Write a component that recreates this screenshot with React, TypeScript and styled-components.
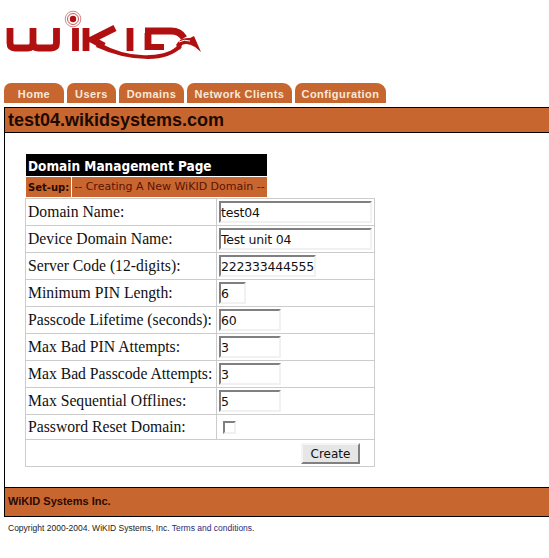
import React from "react";
import styled, { createGlobalStyle } from "styled-components";

const orange = "#c8662f";

const GlobalStyle = createGlobalStyle`
  html, body {
    margin: 0;
    padding: 0;
    background: #fff;
    overflow: hidden;
  }
`;

type FieldType = {
  label: string;
  value: string;
  width: number;
};

const fields: FieldType[] = [
  { label: "Domain Name:", value: "test04", width: 153 },
  { label: "Device Domain Name:", value: "Test unit 04", width: 153 },
  { label: "Server Code (12-digits):", value: "222333444555", width: 97 },
  { label: "Minimum PIN Length:", value: "6", width: 27 },
  { label: "Passcode Lifetime (seconds):", value: "60", width: 62 },
  { label: "Max Bad PIN Attempts:", value: "3", width: 62 },
  { label: "Max Bad Passcode Attempts:", value: "3", width: 62 },
  { label: "Max Sequential Offlines:", value: "5", width: 62 },
];

const tabs = [
  { label: "Home", width: 60 },
  { label: "Users", width: 49 },
  { label: "Domains", width: 65 },
  { label: "Network Clients", width: 105 },
  { label: "Configuration", width: 91 },
];

const Logo = () => (
  <LogoSvg viewBox="0 0 210 60" width="210" height="60">
    <g fill="none" stroke="#b01010">
      <circle cx="73" cy="19" r="7.800" strokeWidth="1" opacity="0.5" />
      <circle cx="73" cy="19" r="5.500" strokeWidth="1" opacity="0.7" />
      <path
        d="M10 28V43Q10 48 15 48H28Q33 48 33 43V28M33 43Q33 48 38 48H51Q56.500 48 56.500 43V28"
        strokeWidth="6.800"
      />
      <path d="M75.500 28V51M86 28V51M115 28L92 39.500L104 46" strokeWidth="6.800" />
      <path d="M130 28V51" strokeWidth="6.800" />
      <path d="M148 33V50M145 31H171Q180 31 184 38" strokeWidth="6.800" />
      <path d="M148 47H164" strokeWidth="6" />
    </g>
    <g fill="#b01010">
      <circle cx="73" cy="19" r="3.200" />
      <path d="M98 42Q125 57 150 55Q170 54 178 45L182 47Q170 59 148 59Q122 59 96 47Z" />
      <path d="M176 45Q180 37 190 38L194 36L201 52L195 47Q187 42 182 45L180 50Z" />
    </g>
    <path d="M179 42Q184 39 190 41" fill="none" stroke="#fff" strokeWidth="1" />
  </LogoSvg>
);

export default function App() {
  return (
    <Page>
      <GlobalStyle />
      <LogoBar>
        <Logo />
      </LogoBar>
      <TabRow>
        {tabs.map((t) => (
          <Tab key={t.label} href="#" $w={t.width}>
            {t.label}
          </Tab>
        ))}
      </TabRow>
      <Panel>
        <HostBar>test04.wikidsystems.com</HostBar>
        <Content>
          <PageTitle>Domain Management Page</PageTitle>
          <SubRow>
            <SubLabel>Set-up:</SubLabel>
            <SubText>-- Creating A New WiKID Domain --</SubText>
          </SubRow>
          <FormTable>
            <tbody>
              {fields.map((f) => (
                <tr key={f.label}>
                  <LabelCell>{f.label}</LabelCell>
                  <ValueCell>
                    <TextInput $w={f.width} defaultValue={f.value} />
                  </ValueCell>
                </tr>
              ))}
              <tr>
                <ShortLabelCell>Password Reset Domain:</ShortLabelCell>
                <ShortValueCell>
                  <CheckBox />
                </ShortValueCell>
              </tr>
              <tr>
                <ButtonCell colSpan={2}>
                  <CreateButton type="button">Create</CreateButton>
                </ButtonCell>
              </tr>
            </tbody>
          </FormTable>
        </Content>
        <FooterBar>WiKID Systems Inc.</FooterBar>
      </Panel>
      <Copyright>
        Copyright 2000-2004. WiKID Systems, Inc. <TermsLink href="#">Terms and conditions</TermsLink>.
      </Copyright>
    </Page>
  );
}

const Page = styled.div`
  width: 549px;
  height: 558px;
  overflow: hidden;
`;

const LogoBar = styled.div`
  height: 83px;
`;

const LogoSvg = styled.svg`
  display: block;
`;

const TabRow = styled.div`
  display: flex;
  gap: 3px;
  padding-left: 4px;
  height: 20px;
`;

const Tab = styled.a<{ $w: number }>`
  display: block;
  width: ${(p) => p.$w}px;
  text-align: center;
  background: ${orange};
  border-radius: 7px 9px 0 0;
  color: #f7e9dc;
  font: bold 11px/22px "Liberation Sans", Arial, sans-serif;
  letter-spacing: 0.45px;
  text-decoration: none;
`;

const Panel = styled.div`
  margin: 4px 0 0 4px;
  border-left: 1px solid #000;
`;

const HostBar = styled.div`
  height: 24px;
  padding-left: 3px;
  background: ${orange};
  border-top: 1px solid #000;
  border-bottom: 1px solid #000;
  color: #1c0a02;
  font: bold 18px/24px "Liberation Sans", Arial, sans-serif;
`;

const Content = styled.div`
  height: 354px;
  padding: 21px 0 0 20px;
  box-sizing: border-box;
`;

const PageTitle = styled.div`
  width: 241px;
  height: 22px;
  margin-left: 1px;
  padding-left: 2px;
  box-sizing: border-box;
  background: #000;
  color: #fff;
  font: bold 13.500px/24px "DejaVu Sans Condensed", "DejaVu Sans", sans-serif;
  font-stretch: condensed;
`;

const SubRow = styled.div`
  display: flex;
  gap: 1px;
  width: 241px;
  height: 20px;
  margin: 1px 0 1px 1px;
`;

const SubLabel = styled.div`
  width: 45px;
  padding-left: 2px;
  box-sizing: border-box;
  background: ${orange};
  color: #2a0a02;
  font: bold 10px/21px "DejaVu Sans", sans-serif;
`;

const SubText = styled.div`
  flex: 1;
  text-align: center;
  background: ${orange};
  color: #5a1206;
  font: 11px/20px "DejaVu Sans", sans-serif;
  white-space: nowrap;
`;

const FormTable = styled.table`
  width: 350px;
  table-layout: fixed;
  border-collapse: collapse;
  border: 1px solid #ccc;
  font: 15.700px "Liberation Serif", "Times New Roman", serif;
  color: #111;
`;

const LabelCell = styled.td`
  width: 188px;
  height: 26px;
  padding: 0 0 0 2px;
  border: 1px solid #ccc;
  white-space: nowrap;
`;

const ValueCell = styled.td`
  height: 26px;
  padding: 0 0 0 2px;
  border: 1px solid #ccc;
`;

const ShortLabelCell = styled(LabelCell)`
  height: 24px;
`;

const ShortValueCell = styled(ValueCell)`
  height: 24px;
  padding-left: 6px;
`;

const ButtonCell = styled.td`
  height: 23px;
  padding: 3px 14px 0 0;
  box-sizing: content-box;
  border: 1px solid #ccc;
  text-align: right;
  vertical-align: top;
  line-height: 0;
`;

const TextInput = styled.input<{ $w: number }>`
  display: block;
  width: ${(p) => p.$w}px;
  height: 22px;
  padding: 0;
  box-sizing: border-box;
  border-style: solid;
  border-width: 2px;
  border-color: #808080 #f1f1f1 #f1f1f1 #808080;
  background: #fff;
  color: #111;
  font: 12.500px "DejaVu Sans", sans-serif;
  letter-spacing: -0.2px;
  outline: none;
`;

const CheckBox = styled.span`
  display: block;
  width: 13px;
  height: 13px;
  box-sizing: border-box;
  border-style: solid;
  border-width: 2px;
  border-color: #808080 #f1f1f1 #f1f1f1 #808080;
`;

const CreateButton = styled.button`
  width: 59px;
  height: 21px;
  padding: 0;
  background: #e6e6e6;
  border-style: solid;
  border-width: 2px;
  border-color: #f4f4f4 #808080 #808080 #f4f4f4;
  color: #111;
  font: 12px "DejaVu Sans", sans-serif;
`;

const FooterBar = styled.div`
  height: 28px;
  padding-left: 3px;
  background: ${orange};
  border-top: 1px solid #000;
  border-bottom: 1px solid #000;
  color: #2a0a02;
  font: bold 11px/27px "Liberation Sans", Arial, sans-serif;
`;

const Copyright = styled.div`
  padding: 5px 0 0 8px;
  color: #222;
  font: 8.500px/12px "Liberation Sans", Arial, sans-serif;
`;

const TermsLink = styled.a`
  color: #2a2a7a;
  text-decoration: none;
`;
